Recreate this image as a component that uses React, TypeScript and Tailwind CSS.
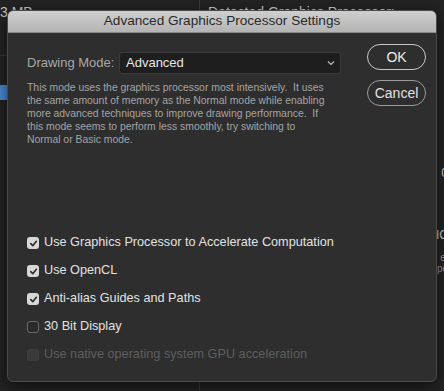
import React from "react";

const font = { fontFamily: '"Liberation Sans", Arial, sans-serif' };

function Check({ checked, disabled }: { checked?: boolean; disabled?: boolean }) {
  if (disabled) {
    return <span className="w-[12px] h-[12px] rounded-[3px] bg-[#3a3a3a] border border-[#3f3f3f] shrink-0" />;
  }
  if (checked) {
    return (
      <span className="w-[12px] h-[12px] rounded-[3px] bg-[#d8d8d8] flex items-center justify-center shrink-0">
        <svg width="9" height="9" viewBox="0 0 10 10">
          <path d="M2 5.2 L4.2 7.4 L8.2 2.6" fill="none" stroke="#2a2a2a" strokeWidth="1.8" strokeLinecap="round" strokeLinejoin="round" />
        </svg>
      </span>
    );
  }
  return <span className="w-[12px] h-[12px] rounded-[3px] bg-[#2a2a2a] border border-[#6a6a6a] shrink-0" />;
}

const description = [
  "This mode uses the graphics processor most intensively.\u00a0 It uses",
  "the same amount of memory as the Normal mode while enabling",
  "more advanced techniques to improve drawing performance.\u00a0 If",
  "this mode seems to perform less smoothly, try switching to",
  "Normal or Basic mode.",
];

export default function App() {
  const options = [
    { label: "Use Graphics Processor to Accelerate Computation", checked: true },
    { label: "Use OpenCL", checked: true },
    { label: "Anti-alias Guides and Paths", checked: true },
    { label: "30 Bit Display", checked: false },
    { label: "Use native operating system GPU acceleration", disabled: true },
  ];

  return (
    <div className="relative w-[444px] h-[391px] overflow-hidden bg-[#232323] text-[#bdbdbd]" style={font}>
      {/* background panel behind the dialog */}
      <div className="flex h-full">
        <div className="w-[200px] border-r border-[#3a3a3a] flex flex-col">
          <div className="text-[14px] text-[#c8c8c8] pt-[2px]">3 MB</div>
          <div className="h-[1px] bg-[#3a3a3a] mt-[32px]" />
          <div className="mt-[29px] w-[7px] h-[15px] bg-[#4a8ad8]" />
        </div>
        <div className="flex-1 pl-[8px]">
          <div className="text-[14px] text-[#c8c8c8] pt-[2px]">Detected Graphics Processor:</div>
          <div className="flex flex-col items-end mt-[141px] text-[12px] text-[#d0d0d0]">
            <span className="-mr-[4px]">0</span>
            <span className="-mr-[4px] mt-[44px]">IC</span>
            <span className="-mr-[4px] mt-[8px] text-[10px] leading-[11px] text-[#999]">el</span>
            <span className="-mr-[4px] text-[10px] leading-[11px] text-[#999]">pe</span>
          </div>
        </div>
      </div>

      {/* dialog */}
      <div className="absolute left-[7px] top-[10px] w-[430px] h-[372px] rounded-[6px] bg-[#2e2e2e] border border-[#4a4a4a] shadow-[0_4px_16px_rgba(0,0,0,0.6)] overflow-hidden flex flex-col">
        <div className="h-[22px] bg-gradient-to-b from-[#cfcfcf] to-[#b4b4b4] flex items-center justify-center text-[13.6px] text-[#2a2a2a] border-b border-[#8a8a8a]">
          Advanced Graphics Processor Settings
        </div>
        <div className="flex flex-1 pl-[19px] pr-[10px]">
          <div className="flex-1 flex flex-col">
            <div className="flex items-center mt-[19px]">
              <span className="text-[13px] text-[#a8a8a8] w-[92px]">Drawing Mode:</span>
              <div className="w-[222px] h-[22px] bg-[#1e1e1e] border border-[#3c3c3c] rounded-[3px] flex items-center justify-between pl-[6px] pr-[5px]">
                <span className="text-[13px] text-[#e6e6e6]">Advanced</span>
                <svg width="8" height="6" viewBox="0 0 8 6">
                  <path d="M1 1.5 L4 4.5 L7 1.5" fill="none" stroke="#bbbbbb" strokeWidth="1.2" />
                </svg>
              </div>
            </div>
            <div className="mt-[7px] text-[10.4px] leading-[13px] text-[#a4a4a4] whitespace-nowrap">
              {description.map((line) => (
                <div key={line}>{line}</div>
              ))}
            </div>
            <div className="flex flex-col gap-[12px] mt-[89px]">
              {options.map((o) => (
                <div key={o.label} className="flex items-center gap-[5px] h-[16px]">
                  <Check checked={o.checked} disabled={o.disabled} />
                  <span className={"text-[12.7px] " + (o.disabled ? "text-[#5e5e5e]" : "text-[#e2e2e2]")}>{o.label}</span>
                </div>
              ))}
            </div>
          </div>
          <div className="flex flex-col gap-[10px] mt-[11px] w-[59px]">
            <button className="h-[26px] rounded-full border border-[#c8c8c8] text-[14px] text-[#ececec]">OK</button>
            <button className="h-[26px] rounded-full border border-[#9a9a9a] text-[14px] text-[#e0e0e0]">Cancel</button>
          </div>
        </div>
      </div>
    </div>
  );
}
